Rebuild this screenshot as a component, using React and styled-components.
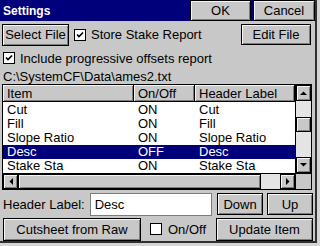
import styled, { createGlobalStyle } from "styled-components";

const GlobalStyle = createGlobalStyle`
  html, body {
    margin: 0;
    padding: 0;
    background: #c8c8c8;
  }
  body {
    font-family: "Liberation Sans", sans-serif;
    font-size: 13px;
    color: #000;
  }
`;

const Screen = styled.div`
  width: 320px;
  height: 246px;
  background: #d4d4d4;
  overflow: hidden;
`;

const Dialog = styled.div`
  width: 317px;
  height: 243px;
  box-sizing: border-box;
  background: #c8c8c8;
  border-right: 2px solid #303030;
  border-bottom: 2px solid #303030;
  display: flex;
  flex-direction: column;
`;

const TitleBar = styled.div`
  height: 21px;
  background: #00007b;
  display: flex;
  align-items: stretch;
  flex-shrink: 0;
`;

const Title = styled.div`
  flex: 1;
  color: #fff;
  font-weight: bold;
  font-size: 12px;
  padding-left: 3px;
  display: flex;
  align-items: center;
`;

const Button = styled.button`
  box-sizing: border-box;
  width: ${(p) => p.$w}px;
  height: ${(p) => p.$h || 22}px;
  margin: 0;
  padding: 0;
  background: #c8c8c8;
  border: 1px solid #000;
  box-shadow: inset 1px 1px 0 #f4f4f4, inset -1px -1px 0 #7c7c7c;
  font-family: "Liberation Sans", sans-serif;
  font-size: 13px;
  color: #000;
  display: flex;
  align-items: center;
  justify-content: center;
  flex-shrink: 0;
`;

const TitleButtons = styled.div`
  display: flex;
  gap: 2px;
`;

const Row = styled.div`
  box-sizing: border-box;
  display: flex;
  align-items: center;
  padding: ${(p) => p.$pad || "0 0 0 2px"};
  height: ${(p) => p.$h}px;
  flex-shrink: 0;
`;

const Check = styled.span`
  box-sizing: border-box;
  width: 12px;
  height: 12px;
  background: #fff;
  border: 1px solid #000;
  display: inline-flex;
  align-items: center;
  justify-content: center;
  flex-shrink: 0;
  margin-left: ${(p) => p.$ml || 0}px;
  margin-right: ${(p) => p.$mr || 5}px;
`;

const Label = styled.span`
  white-space: nowrap;
`;

const Spacer = styled.div`
  flex: 1;
`;

const ListBox = styled.div`
  box-sizing: border-box;
  margin: 0 3px 0 2px;
  height: 106px;
  border: 1px solid #000;
  background: #fff;
  display: grid;
  grid-template-columns: 1fr 16px;
  grid-template-rows: 1fr 16px;
  flex-shrink: 0;
`;

const ListView = styled.div`
  overflow: hidden;
  display: flex;
  flex-direction: column;
`;

const Header = styled.div`
  display: grid;
  grid-template-columns: 131px 61px 1fr;
  height: 17px;
  flex-shrink: 0;
`;

const HeadCell = styled.div`
  box-sizing: border-box;
  background: #c8c8c8;
  border-right: 1px solid #000;
  border-bottom: 1px solid #000;
  box-shadow: inset 1px 1px 0 #f4f4f4, inset -1px -1px 0 #7c7c7c;
  padding-left: 4px;
  display: flex;
  align-items: center;
  white-space: nowrap;
  overflow: hidden;
`;

const Rows = styled.div`
  padding-top: 1px;
`;

const ItemRow = styled.div`
  display: grid;
  grid-template-columns: 131px 61px 1fr;
  height: 14px;
  align-items: center;
  background: ${(p) => (p.$sel ? "#00007b" : "transparent")};
  color: ${(p) => (p.$sel ? "#fff" : "#000")};
`;

const Cell = styled.div`
  padding-left: 4px;
  white-space: nowrap;
  line-height: 14px;
`;

const VScroll = styled.div`
  background: #e4e4e4;
  border-left: 1px solid #000;
  display: flex;
  flex-direction: column;
`;

const HScroll = styled.div`
  background: #e4e4e4;
  border-top: 1px solid #000;
  display: flex;
`;

const Corner = styled.div`
  background: #c8c8c8;
  border-top: 1px solid #000;
  border-left: 1px solid #000;
`;

const ScrollBtn = styled.div`
  box-sizing: border-box;
  width: ${(p) => p.$w || 15}px;
  height: ${(p) => p.$h || 15}px;
  background: #c8c8c8;
  border: 1px solid #000;
  box-shadow: inset 1px 1px 0 #f4f4f4, inset -1px -1px 0 #7c7c7c;
  display: flex;
  align-items: center;
  justify-content: center;
  flex-shrink: 0;
  margin-top: ${(p) => p.$mt || 0}px;
`;

const TextBox = styled.div`
  box-sizing: border-box;
  width: 122px;
  height: 23px;
  background: #fff;
  border: 1px solid #7c7c7c;
  padding-left: 4px;
  display: flex;
  align-items: center;
  margin-left: 5px;
`;

const CheckMark = () => (
  <svg width="8" height="8" viewBox="0 0 8 8">
    <path d="M1 3.5 L3 5.5 L7 1.5" stroke="#000" strokeWidth="1.6" fill="none" />
  </svg>
);

const Arrow = ({ dir }) => {
  const d = {
    up: "M0 4 L3.5 0.5 L7 4 Z",
    down: "M0 0 L3.5 3.5 L7 0 Z",
    left: "M4 0 L0.5 3.5 L4 7 Z",
    right: "M0 0 L3.5 3.5 L0 7 Z",
  }[dir];
  const vertical = dir === "up" || dir === "down";
  return (
    <svg width={vertical ? 7 : 4} height={vertical ? 4 : 7} viewBox={vertical ? "0 0 7 4" : "0 0 4 7"}>
      <path d={d} fill="#000" />
    </svg>
  );
};

const items = [
  ["Cut", "ON", "Cut"],
  ["Fill", "ON", "Fill"],
  ["Slope Ratio", "ON", "Slope Ratio"],
  ["Desc", "OFF", "Desc"],
  ["Stake Sta", "ON", "Stake Sta"],
];

export default function App() {
  return (
    <Screen>
      <GlobalStyle />
      <Dialog>
        <TitleBar>
          <Title>Settings</Title>
          <TitleButtons>
            <Button $w={61} $h={21}>OK</Button>
            <Button $w={62} $h={21}>Cancel</Button>
          </TitleButtons>
        </TitleBar>

        <Row $h={26} $pad="1px 4px 0 2px">
          <Button $w={67} $h={22}>Select File</Button>
          <Check $ml={5} $mr={5}>
            <CheckMark />
          </Check>
          <Label>Store Stake Report</Label>
          <Spacer />
          <Button $w={70} $h={21}>Edit File</Button>
        </Row>

        <Row $h={22} $pad="0 0 0 3px">
          <Check>
            <CheckMark />
          </Check>
          <Label>Include progressive offsets report</Label>
        </Row>

        <Row $h={15} $pad="0 0 0 3px">
          <Label>C:\SystemCF\Data\ames2.txt</Label>
        </Row>

        <ListBox>
          <ListView>
            <Header>
              <HeadCell>Item</HeadCell>
              <HeadCell>On/Off</HeadCell>
              <HeadCell>Header Label</HeadCell>
            </Header>
            <Rows>
              {items.map(([a, b, c]) => (
                <ItemRow key={a} $sel={a === "Desc"}>
                  <Cell>{a}</Cell>
                  <Cell>{b}</Cell>
                  <Cell>{c}</Cell>
                </ItemRow>
              ))}
            </Rows>
          </ListView>
          <VScroll>
            <ScrollBtn $w={15} $h={16}>
              <Arrow dir="up" />
            </ScrollBtn>
            <ScrollBtn $w={15} $h={15} $mt={16} />
            <Spacer />
            <ScrollBtn $w={15} $h={16}>
              <Arrow dir="down" />
            </ScrollBtn>
          </VScroll>
          <HScroll>
            <ScrollBtn $w={15} $h={15}>
              <Arrow dir="left" />
            </ScrollBtn>
            <ScrollBtn $w={243} $h={15} />
            <Spacer />
            <ScrollBtn $w={15} $h={15}>
              <Arrow dir="right" />
            </ScrollBtn>
          </HScroll>
          <Corner />
        </ListBox>

        <Row $h={26} $pad="2px 2px 0 3px">
          <Label>Header Label:</Label>
          <TextBox>Desc</TextBox>
          <Spacer />
          <Button $w={46} $h={22}>Down</Button>
          <Button $w={46} $h={22} style={{ marginLeft: 4 }}>Up</Button>
        </Row>

        <Row $h={25} $pad="1px 2px 0 3px">
          <Button $w={138} $h={23}>Cutsheet from Raw</Button>
          <Check $ml={9} $mr={6} />
          <Label>On/Off</Label>
          <Spacer />
          <Button $w={97} $h={23}>Update Item</Button>
        </Row>
      </Dialog>
    </Screen>
  );
}
